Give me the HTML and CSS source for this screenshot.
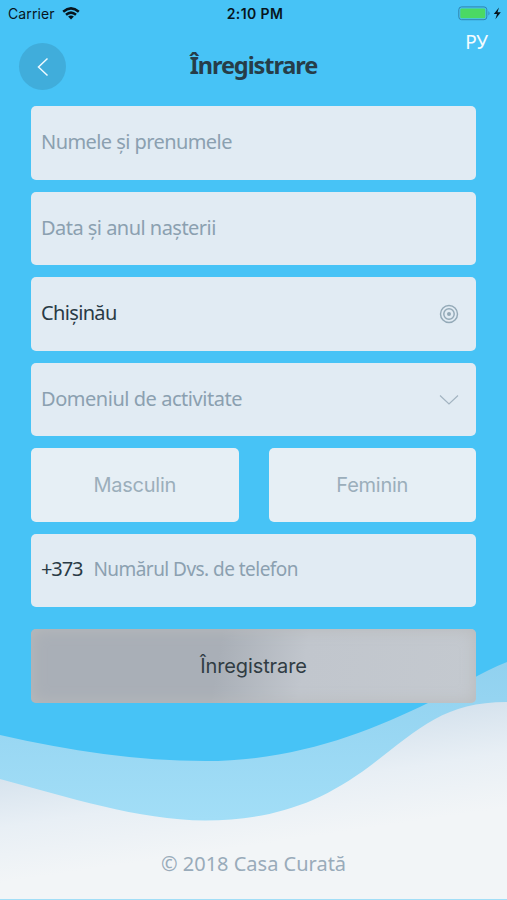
FILE: index.html
```html
<!DOCTYPE html>
<html lang="ro">
<head>
<meta charset="utf-8">
<title>Înregistrare</title>
<link rel="stylesheet" href="styles.css">
</head>
<body>
<div class="screen">
  <svg class="waves" viewBox="0 0 507 900" aria-hidden="true">
    <defs>
      <linearGradient id="back" x1="0" y1="662" x2="0" y2="820" gradientUnits="userSpaceOnUse">
        <stop offset="0" stop-color="#91d1ef"/><stop offset="1" stop-color="#a2def7"/>
      </linearGradient>
      <linearGradient id="front" x1="253" y1="735" x2="269" y2="843" gradientUnits="userSpaceOnUse">
        <stop offset="0" stop-color="#d5e2ed"/><stop offset=".5" stop-color="#e8eff5"/><stop offset="1" stop-color="#f2f5f7"/>
      </linearGradient>
    </defs>
    <path fill="url(#back)" d="M0 735C70 751 138 761 205 761C294 761 367 733 430 702C458 688 481 672 507 662V900H0Z"/>
    <path fill="url(#front)" d="M0 779C68 797 138 820 205 820.500C270 820 318 805 370 766C420 728 444 702 507 702V899H0Z"/>
  </svg>

  <header class="status">
    <div class="carrier"><span>Carrier</span>
      <svg width="18" height="13" viewBox="0 0 18 13" fill="none" stroke="#07151d" stroke-width="2.500"><path d="M1.200 4.700Q9-2 16.800 4.700M4 7.800Q9 3.500 14 7.800"/><path d="M9 12.500L6.100 9.600Q9 7.300 11.900 9.600Z" fill="#07151d" stroke="none"/></svg>
    </div>
    <time class="clock">2:10 PM</time>
    <div class="power">
      <svg width="44" height="15" viewBox="0 0 44 15"><rect x=".8" y=".9" width="28" height="12.800" rx="2.800" fill="none" stroke="#3085ae" stroke-width="1"/><rect x="2.300" y="2.400" width="25" height="9.800" rx="1.300" fill="#4bd964"/><path d="M30.500 5Q32.500 7.300 30.500 9.600Z" fill="#3085ae"/><path d="M41 1.500L35.800 8H39L37.400 13.200L42.800 6.300H39.500Z" fill="#07151d"/></svg>
    </div>
  </header>

  <nav class="top">
    <button class="back" aria-label="Înapoi"><svg width="14" height="20" viewBox="0 0 14 20" fill="none" stroke="#eefaff" stroke-width="1.500"><path d="M11.500 1.500L2.500 10L11.500 18.500"/></svg></button>
    <h1 class="title">Înregistrare</h1>
    <a class="lang">РУ</a>
  </nav>

  <main class="form">
    <div class="field"><span class="hint name">Numele și prenumele</span></div>
    <div class="field"><span class="hint birth">Data și anul nașterii</span></div>
    <div class="field"><span class="value city">Chișinău</span>
      <svg width="20" height="20" viewBox="0 0 20 20" fill="none" stroke="#93a9b7" stroke-width="1.450"><circle cx="10" cy="10" r="8.500"/><circle cx="10" cy="10" r="5.200"/><circle cx="10" cy="10" r="2" fill="#93a9b7" stroke="none"/></svg>
    </div>
    <div class="field"><span class="hint domain">Domeniul de activitate</span>
      <svg width="20" height="12" viewBox="0 0 20 12" fill="none" stroke="#a3b4c1" stroke-width="1.200"><path d="M1 1.500L10 10L19 1.500"/></svg>
    </div>
    <div class="choices">
      <button class="choice">Masculin</button>
      <button class="choice">Feminin</button>
    </div>
    <div class="field phone"><span class="value code">+373</span><span class="hint number">Numărul Dvs. de telefon</span></div>
    <button class="submit">Înregistrare</button>
  </main>
  <footer class="copyright">© 2018 Casa Curată</footer>
</div>
</body>
</html>
```
FILE: styles.css
```css
* { box-sizing: border-box; }
body { margin: 0; }
button { border: 0; padding: 0; font: inherit; color: inherit; }
.screen {
  position: relative;
  width: 507px;
  height: 900px;
  overflow: hidden;
  display: flex;
  flex-direction: column;
  background: #47c3f6;
  font-family: "Noto Sans", sans-serif;
  font-size: 20px;
}
.screen > * { position: relative; flex-shrink: 0; }
.screen > .waves { position: absolute; inset: 0; width: 507px; height: 900px; }
.status {
  display: grid;
  grid-template-columns: 1fr auto 1fr;
  align-items: center;
  height: 28px;
  padding: 0 5px 0 8px;
  font: 14px/28px Inter, sans-serif;
  color: #07151d;
}
.carrier { display: flex; align-items: center; gap: 7px; letter-spacing: .1px; }
.clock { font-weight: 600; letter-spacing: .4px; }
.power { display: flex; justify-content: flex-end; }
.power svg, .carrier svg { display: block; }
.power svg { margin-top: -2px; }
.carrier svg { margin-top: -2px; }
.top {
  display: grid;
  grid-template-columns: 80px 1fr 80px;
  height: 78px;
}
.back {
  width: 47px;
  height: 47px;
  margin: 15px 0 0 19px;
  border-radius: 50%;
  background: #40addb;
  display: grid;
  place-items: center;
}
.title {
  margin: 20px 0 0;
  text-align: center;
  font-size: 23.500px;
  line-height: 34px;
  font-weight: 700;
  letter-spacing: -1.080px;
  color: #263d49;
}
.lang { margin: 0 19px 0 0; text-align: right; font-size: 19px; line-height: 28px; color: #f4fcff; }
.form {
  display: flex;
  flex-direction: column;
  gap: 12.100px;
  margin: 0 31px;
}
.field {
  height: 73.500px;
  border-radius: 5px;
  background: #e1ebf3;
  padding: 0 17px 2px 10px;
  display: flex;
  align-items: center;
  justify-content: space-between;
  white-space: nowrap;
}
.field svg { margin-top: 2px; }
.hint { color: #8ba0b0; }
.value { color: #293a45; }
.name { letter-spacing: -.57px; }
.birth { letter-spacing: -.53px; }
.city { letter-spacing: -.65px; }
.domain { letter-spacing: -.46px; }
.code { letter-spacing: -1.100px; }
.number { font-size: 19px; letter-spacing: -.54px; }
.choices { display: grid; grid-template-columns: 1fr 1fr; gap: 30px; }
.choice {
  height: 73.500px;
  border-radius: 5px;
  background: #e6eff5;
  color: #9baebb;
  font: 20px Inter, sans-serif;
  letter-spacing: -.25px;
}
.phone { justify-content: flex-start; gap: 11px; padding-bottom: 4px; }
.submit {
  height: 73.500px;
  margin-top: 9.500px;
  border-radius: 5px;
  background: linear-gradient(100deg, #a9afb7 0 42%, #c1c6cd 61%, #c4c9cf);
  box-shadow: inset 0 0 16px #b8babb;
  color: #303c43;
  font: 20px Inter, sans-serif;
  letter-spacing: -.1px;
}
.copyright {
  position: relative;
  margin-top: 146px;
  text-align: center;
  line-height: 30px;
  color: #99abba;
}
```
